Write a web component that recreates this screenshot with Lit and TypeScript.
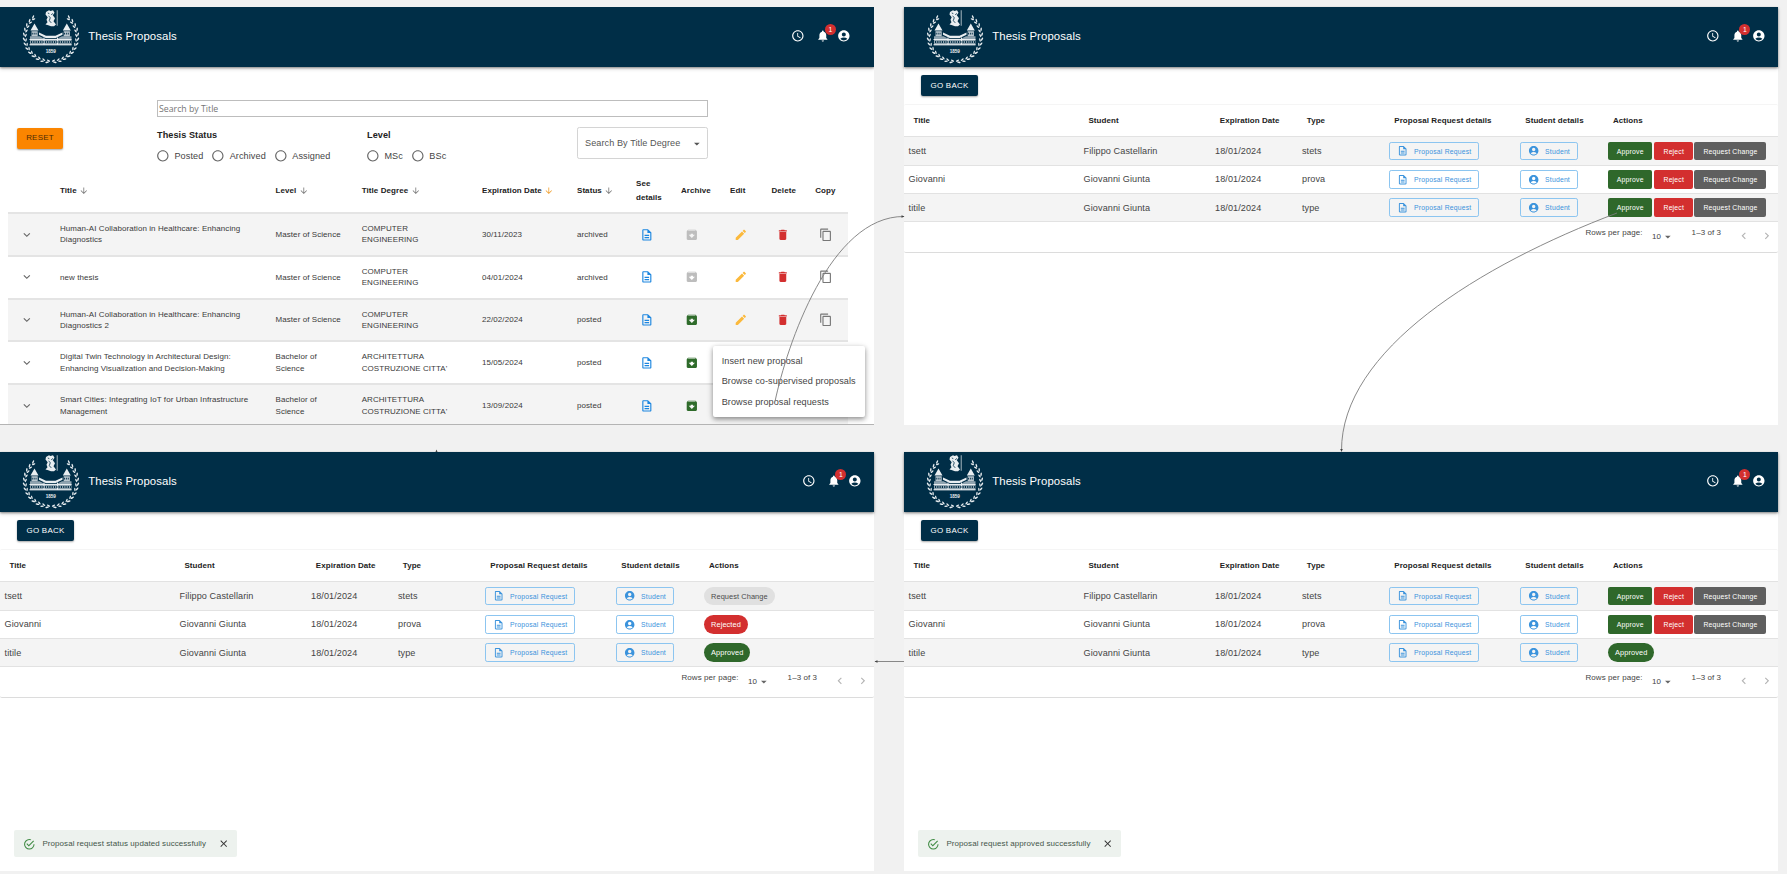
import { LitElement, html, css, svg, nothing } from "lit";
import { customElement, property } from "lit/decorators.js";

const ICONS: Record<string, string> = {
  clock:
    "M11.99 2C6.47 2 2 6.48 2 12s4.47 10 9.99 10C17.52 22 22 17.52 22 12S17.52 2 11.99 2zM12 20c-4.42 0-8-3.58-8-8s3.58-8 8-8 8 3.58 8 8-3.58 8-8 8zm.5-13H11v6l5.25 3.15.75-1.23-4.5-2.67z",
  bell: "M12 22c1.1 0 2-.9 2-2h-4c0 1.1.89 2 2 2zm6-6v-5c0-3.07-1.64-5.64-4.5-6.32V4c0-.83-.67-1.5-1.5-1.5s-1.5.67-1.5 1.5v.68C7.63 5.36 6 7.92 6 11v5l-2 2v1h16v-1l-2-2z",
  account:
    "M12 2C6.48 2 2 6.48 2 12s4.48 10 10 10 10-4.48 10-10S17.52 2 12 2zm0 4c1.93 0 3.5 1.57 3.5 3.5S13.93 13 12 13s-3.5-1.57-3.5-3.5S10.07 6 12 6zm0 14c-2.03 0-4.43-.82-6.14-2.88C7.55 15.8 9.68 15 12 15s4.45.8 6.14 2.12C16.43 19.18 14.03 20 12 20z",
  doc: "M8 16h8v2H8zm0-4h8v2H8zm6-10H6c-1.1 0-2 .9-2 2v16c0 1.1.89 2 1.99 2H18c1.1 0 2-.9 2-2V8l-6-6zm4 18H6V4h7v5h5v11z",
  archive:
    "M20.54 5.23l-1.39-1.68C18.88 3.21 18.47 3 18 3H6c-.47 0-.88.21-1.16.55L3.46 5.23C3.17 5.57 3 6.02 3 6.5V19c0 1.1.9 2 2 2h14c1.1 0 2-.9 2-2V6.5c0-.48-.17-.93-.46-1.27zM12 17.5L6.5 12H10v-2h4v2h3.5L12 17.5zM5.12 5l.81-1h12l.94 1H5.12z",
  edit: "M3 17.25V21h3.75L17.81 9.94l-3.75-3.75L3 17.25zM20.71 7.04c.39-.39.39-1.02 0-1.41l-2.34-2.34a.9959.9959 0 0 0-1.41 0l-1.83 1.83 3.75 3.75 1.83-1.83z",
  trash: "M6 19c0 1.1.9 2 2 2h8c1.1 0 2-.9 2-2V7H6v12zM19 4h-3.5l-1-1h-5l-1 1H5v2h14V4z",
  copy: "M16 1H4c-1.1 0-2 .9-2 2v14h2V3h12V1zm3 4H8c-1.1 0-2 .9-2 2v14c0 1.1.9 2 2 2h11c1.1 0 2-.9 2-2V7c0-1.1-.9-2-2-2zm0 16H8V7h11v14z",
  down: "M7.41 8.59 12 13.17l4.59-4.58L18 10l-6 6-6-6 1.41-1.41z",
  left: "M15.41 16.59 10.83 12l4.58-4.59L14 6l-6 6 6 6 1.41-1.41z",
  right: "M8.59 16.59 13.17 12 8.59 7.41 10 6l6 6-6 6-1.41-1.41z",
  caret: "M7 10l5 5 5-5z",
  arrow: "M20 12l-1.41-1.41L13 16.17V4h-2v12.17l-5.58-5.59L4 12l8 8 8-8z",
  radio:
    "M12 2C6.48 2 2 6.48 2 12s4.48 10 10 10 10-4.48 10-10S17.52 2 12 2zm0 18c-4.42 0-8-3.58-8-8s3.58-8 8-8 8 3.58 8 8-3.58 8-8 8z",
  done: "M20 12a8 8 0 1 1-5.76-7.69l1.57-1.57A9.8 9.8 0 0 0 12 2a10 10 0 1 0 10 10h-2zM7.91 10.08 6.5 11.5 11 16 21 6l-1.41-1.42L11 13.17z",
  close:
    "M19 6.41 17.59 5 12 10.59 6.41 5 5 6.41 10.59 12 5 17.59 6.41 19 12 13.41 17.59 19 19 17.59 13.41 12z",
};

const icon = (name: string, cls = "") =>
  html`<svg class="icon ${cls}" viewBox="0 0 24 24"><path d=${ICONS[name]} /></svg>`;

const shared = css`
  :host {
    display: block;
    font-family: "Liberation Sans", Arial, sans-serif;
    box-sizing: border-box;
  }
  *,
  *::before {
    box-sizing: border-box;
  }
  .icon {
    width: 13.66px;
    height: 13.66px;
    fill: currentColor;
    flex: none;
    display: block;
  }
`;

function leaf(angle: number, side: number) {
  const a = (angle * Math.PI) / 180;
  const x = 29 + side * Math.sin(a) * 26;
  const y = 28.6 - Math.cos(a) * 24.8;
  return svg`<g transform="translate(${x.toFixed(2)} ${y.toFixed(2)}) rotate(${(side * angle).toFixed(1)})">
    <ellipse cx="0" cy="-1.3" rx="1.9" ry=".75" transform="rotate(${side * 24})" />
    <ellipse cx=${side * 1.2} cy="1.3" rx="1.8" ry=".7" transform="rotate(${side * -20})" />
  </g>`;
}

@customElement("top-bar")
export class TopBar extends LitElement {
  static styles = [
    shared,
    css`
      :host {
        position: relative;
        z-index: 1;
      }
      .bar {
        height: 59.6px;
        background: #002e47;
        color: #fff;
        display: flex;
        align-items: center;
        padding: 0 12.8px 0 22px;
        box-shadow: 0 1px 2px rgba(0, 0, 0, 0.38), 0 2px 4px rgba(0, 0, 0, 0.16);
      }
      .bar.inset {
        padding-right: 23.3px;
      }
      .logo {
        width: 58px;
        height: 58px;
        fill: #e9eef1;
      }
      .logo text {
        font: bold 4.6px "Liberation Sans", sans-serif;
      }
      .title {
        flex: 1;
        margin-left: 8.2px;
        font-size: 11.38px;
        line-height: 13px;
        letter-spacing: 0.0075em;
        margin-top: -1px;
      }
      .icons {
        display: flex;
        align-items: center;
        margin-top: -1px;
      }
      .bell {
        position: relative;
        margin: 0 7px 0 11.4px;
      }
      .badge {
        position: absolute;
        left: 8.2px;
        top: -5.8px;
        width: 11.4px;
        height: 11.4px;
        border-radius: 50%;
        background: #d32f2f;
        font-size: 6.8px;
        line-height: 11.4px;
        text-align: center;
      }
    `,
  ];
  @property({ type: Boolean }) inset = false;
  render() {
    const angles = Array.from({ length: 13 }, (_, i) => 40 + i * 10.9);
    return html`<div class="bar ${this.inset ? "inset" : ""}">
      <svg class="logo" viewBox="0 0 58 58">
        ${angles.map((a) => svg`${leaf(a, -1)}${leaf(a, 1)}`)}
        <path
          d="M24 4l3-1.800 1.500.8 2.500-.8 1.500 2.500-1.700 2.500 2.200 3-1.500 3 2.500 3.300-2 1.800h-3l-3.500-1.300-2-.4 2-2.300-1-2.500 1.200-2.500-2.200-2.800zM34.800 2.200h.7v15.500h-.7z"
        />
        <path
          d="M26.500 8l1.800 1.500-1 3.200 2 2.200M31 5.500l-1.800 1.200M25.800 5l1.500.6"
          fill="none"
          stroke="#002e47"
          stroke-width=".8"
        />
        <path d="M12.500 15.500l4 7h-8zM44.800 15.500l4 7h-8z" />
        <path d="M9.500 23.200h6.200v5h-6.200zM41.700 23.200h6.200v5h-6.200z" opacity=".8" />
        <path d="M17 24.500l7 3.300h9.500l7-3.300v2.300l-6.700 3.200h-10.100l-6.700-3.200z" />
        <path d="M8 28.200h9.500l5 2.600h12.500l5-2.600h9.500v9h-41.500z" opacity=".62" />
        <path d="M7.500 31h42v.9h-42zM7.500 36.300h42v1h-42zM21.500 29.500h1v7.500h-1zM35 29.500h1v7.500h-1z" />
        <path d="M9 34h40" fill="none" stroke="#002e47" stroke-width="2" stroke-dasharray="1.100 1.200" />
        <path
          d="M9.800 25.600h5.600M42 25.600h5.600"
          fill="none"
          stroke="#002e47"
          stroke-width="1.800"
          stroke-dasharray=".9 1"
        />
        <text x="28.800" y="45.400" text-anchor="middle">1859</text>
      </svg>
      <div class="title">Thesis Proposals</div>
      <div class="icons">
        ${icon("clock")}
        <div class="bell">${icon("bell")}<span class="badge">1</span></div>
        ${icon("account")}
      </div>
    </div>`;
  }
}

interface Proposal {
  title: string;
  level: string;
  degree: string;
  date: string;
  status: string;
}

const PROPOSALS: Proposal[] = [
  { title: "Human-AI Collaboration in Healthcare: Enhancing\nDiagnostics", level: "Master of Science", degree: "COMPUTER\nENGINEERING", date: "30/11/2023", status: "archived" },
  { title: "new thesis", level: "Master of Science", degree: "COMPUTER\nENGINEERING", date: "04/01/2024", status: "archived" },
  { title: "Human-AI Collaboration in Healthcare: Enhancing\nDiagnostics 2", level: "Master of Science", degree: "COMPUTER\nENGINEERING", date: "22/02/2024", status: "posted" },
  { title: "Digital Twin Technology in Architectural Design:\nEnhancing Visualization and Decision-Making", level: "Bachelor of\nScience", degree: "ARCHITETTURA\nCOSTRUZIONE CITTA'", date: "15/05/2024", status: "posted" },
  { title: "Smart Cities: Integrating IoT for Urban Infrastructure\nManagement", level: "Bachelor of\nScience", degree: "ARCHITETTURA\nCOSTRUZIONE CITTA'", date: "13/09/2024", status: "posted" },
];

@customElement("proposal-list")
export class ProposalList extends LitElement {
  static styles = [
    shared,
    css`
      :host {
        position: relative;
        height: 100%;
        overflow: hidden;
        background: #fff;
        border-bottom: 1px solid #b4b4b4;
      }
      .filters {
        display: grid;
        grid-template-columns: 140px 551px;
        padding: 33.4px 0 0 17px;
      }
      .reset {
        margin-top: 27.6px;
        width: 46px;
        height: 21px;
        border-radius: 2px;
        background: #fb8500;
        color: #4f2c06;
        font-size: 7.97px;
        letter-spacing: 0.02857em;
        display: flex;
        align-items: center;
        justify-content: center;
        padding-bottom: 1px;
        box-shadow: 0 1px 2px rgba(0, 0, 0, 0.35);
      }
      .search {
        height: 17px;
        border: 1px solid #bdbdbd;
        padding-left: 1px;
        font: 8.75px/17.4px "Open Sans", sans-serif;
        color: #757575;
      }
      .row {
        display: flex;
        align-items: flex-start;
        margin-top: 10.4px;
      }
      .group {
        width: 210px;
        font-size: 9.1px;
        letter-spacing: 0.00938em;
        color: #333;
        padding-top: 1.6px;
      }
      .group b {
        display: block;
        line-height: 13px;
        color: #222;
      }
      .opts {
        display: flex;
        margin: 6.8px 0 0 -0.8px;
      }
      .opt {
        display: flex;
        align-items: center;
        gap: 4.6px;
        margin-right: 8.2px;
        color: #444;
        white-space: nowrap;
      }
      .opt .icon {
        color: #666;
      }
      .select {
        width: 131px;
        height: 32px;
        border: 1px solid #d4d4d4;
        border-radius: 2.3px;
        display: flex;
        align-items: center;
        justify-content: space-between;
        padding: 0 3px 0 7px;
        font-size: 9.1px;
        letter-spacing: 0.00938em;
        color: #555;
      }
      .table {
        margin: 7px 26px 0 8px;
      }
      .tr {
        display: grid;
        grid-template-columns: 52px 215.5px 86.2px 120.3px 95px 59px 45px 49px 41.5px 43.8px 1fr;
        align-items: center;
        height: 42.8px;
        font-size: 7.97px;
        line-height: 11.39px;
        letter-spacing: 0.01071em;
        white-space: pre-line;
        color: #3a3a3a;
        border-bottom: 2px solid #e4e4e4;
      }
      .tr.head {
        height: 44.6px;
        font-weight: bold;
        color: #222;
        line-height: 13.66px;
      }
      .tr.odd {
        background: #f4f4f4;
      }
      .tr .icon {
        margin-left: 4.2px;
      }
      .tr .chev {
        margin-left: 11.5px;
        color: #666;
      }
      .th {
        display: flex;
        align-items: center;
      }
      .tr .th .icon {
        width: 9.6px;
        height: 9.6px;
        margin-left: 2.6px;
        color: #777;
      }
      .tr .th .icon.on {
        color: #f0a030;
      }
      .doc {
        color: #1c86e0;
      }
      .off {
        color: #bdbdbd;
      }
      .green {
        color: #2e6b2a;
      }
      .edit {
        color: #fbb93c;
      }
      .trash {
        color: #d32f2f;
      }
      .copy {
        color: #777;
      }
      .menu {
        position: absolute;
        left: 712.7px;
        top: 339.3px;
        width: 152.3px;
        height: 70.4px;
        background: #fff;
        border-radius: 2px;
        padding: 4.6px 9px;
        font-size: 9.1px;
        letter-spacing: 0.00938em;
        line-height: 20.5px;
        color: #444;
        white-space: nowrap;
        box-shadow: 0 2px 4px rgba(0, 0, 0, 0.3), 0 2px 7px rgba(0, 0, 0, 0.2);
      }
    `,
  ];
  render() {
    const opt = (t: string) => html`<span class="opt">${icon("radio")}${t}</span>`;
    const th = (t: string, cls = "") => html`<span class="th">${t}${icon("arrow", cls)}</span>`;
    return html`
      <top-bar inset></top-bar>
      <div class="filters">
        <div class="reset">RESET</div>
        <div>
          <div class="search">Search by Title</div>
          <div class="row">
            <div class="group"><b>Thesis Status</b>
              <div class="opts">${["Posted", "Archived", "Assigned"].map(opt)}</div>
            </div>
            <div class="group"><b>Level</b>
              <div class="opts">${["MSc", "BSc"].map(opt)}</div>
            </div>
            <div class="select">Search By Title Degree ${icon("caret")}</div>
          </div>
        </div>
      </div>
      <div class="table">
        <div class="tr head">
          <span></span>${th("Title")}${th("Level")}${th("Title Degree")}${th("Expiration Date", "on")}${th("Status")}
          <span>See<br />details</span><span>Archive</span><span>Edit</span><span>Delete</span><span>Copy</span>
        </div>
        ${PROPOSALS.map(
          (p, i) => html`<div class="tr ${i % 2 ? "" : "odd"}">
            ${icon("down", "chev")}<span>${p.title}</span><span>${p.level}</span><span>${p.degree}</span
            ><span>${p.date}</span><span>${p.status}</span>${icon("doc", "doc")}${icon(
              "archive",
              p.status === "archived" ? "off" : "green",
            )}${icon("edit", "edit")}${icon("trash", "trash")}${icon("copy", "copy")}
          </div>`,
        )}
      </div>
      <div class="menu">
        <div>Insert new proposal</div>
        <div>Browse co-supervised proposals</div>
        <div>Browse proposal requests</div>
      </div>
    `;
  }
}

const REQUESTS = [
  ["tsett", "Filippo Castellarin", "stets"],
  ["Giovanni", "Giovanni Giunta", "prova"],
  ["titile", "Giovanni Giunta", "type"],
];

@customElement("request-list")
export class RequestList extends LitElement {
  static styles = [
    shared,
    css`
      :host {
        position: relative;
        height: 100%;
        background: #fff;
      }
      .back {
        width: 57px;
        height: 21px;
        margin: 8.8px 0 7.800px 17px;
        border-radius: 2px;
        background: #002e47;
        color: #fff;
        font-size: 7.97px;
        letter-spacing: 0.02857em;
        display: flex;
        align-items: center;
        justify-content: center;
        padding-bottom: 1px;
        box-shadow: 0 1px 2px rgba(0, 0, 0, 0.35);
      }
      .card {
        border-top: 1px solid #f5f5f5;
        border-radius: 2px;
        border-bottom: 1.4px solid #dcdcdc;
      }
      .tr {
        display: grid;
        grid-template-columns: 175px 131.4px 87px 87.5px 131px 87.6px 1fr;
        align-items: center;
        height: 28.3px;
        padding-left: 4.6px;
        font-size: 9.1px;
        letter-spacing: 0.00938em;
        color: #444;
        border-bottom: 1px solid #e2e2e2;
      }
      .tr.odd {
        background: #f4f4f4;
      }
      .tr.head {
        height: 32.2px;
        padding-left: 9.4px;
        font-size: 7.97px;
        letter-spacing: 0.01071em;
        font-weight: bold;
        color: #222;
      }
      .btn {
        display: inline-flex;
        align-items: center;
        height: 18.5px;
        border-radius: 2.2px;
        border: 1px solid #8cc5f0;
        color: #3b93dc;
        font-size: 6.83px;
        letter-spacing: 0.02857em;
        padding: 0 8px 0 7px;
        gap: 5.2px;
        width: 90px;
        white-space: nowrap;
      }
      .btn .icon {
        width: 11.4px;
        height: 11.4px;
      }
      .btn.s {
        width: 57.6px;
      }
      .acts {
        display: flex;
        gap: 2px;
      }
      .act {
        width: 44.4px;
        height: 18.4px;
        border-radius: 2px;
        background: #2f682b;
        color: #fff;
        font-size: 6.83px;
        letter-spacing: 0.02857em;
        display: flex;
        align-items: center;
        justify-content: center;
        white-space: nowrap;
      }
      .act.rej {
        width: 38.6px;
        background: #d32f2f;
      }
      .act.chg {
        width: 72px;
        margin-left: -0.6px;
        background: #5f5f5f;
      }
      .chip {
        height: 18.4px;
        border-radius: 10px;
        display: flex;
        align-items: center;
        padding: 0 7px;
        font-size: 7.4px;
        letter-spacing: 0.01071em;
        color: #fff;
        background: #2f682b;
      }
      .chip.rejected {
        background: #d32f2f;
      }
      .chip.change {
        background: #e0e0e0;
        color: #4a4a4a;
      }
      .foot {
        display: flex;
        height: 29.8px;
        padding: 4.4px 4.6px 0 0;
        justify-content: flex-end;
        font-size: 7.97px;
        letter-spacing: 0.01071em;
        line-height: 11.4px;
        color: #444;
      }
      .foot .num {
        margin: 4px 0 0 9.4px;
        display: flex;
      }
      .foot .num .icon {
        margin: -1px 17.4px 0 -0.4px;
        color: #666;
      }
      .range {
        width: 45.3px;
      }
      .foot .nav {
        display: flex;
        gap: 9.2px;
        margin-top: 2.6px;
        color: #b4b4b4;
      }
      .toast {
        position: absolute;
        left: 14px;
        bottom: 13.6px;
        height: 27px;
        border-radius: 2px;
        background: #edf2ee;
        display: flex;
        align-items: center;
        padding: 0 8.6px;
        font-size: 7.97px;
        letter-spacing: 0.01071em;
        color: #44564a;
        white-space: nowrap;
      }
      .toast .ok {
        width: 12.6px;
        height: 12.6px;
        margin-right: 7.2px;
        color: #3e8a42;
      }
      .toast .x {
        width: 11.4px;
        height: 11.4px;
        margin-left: 11.9px;
        margin-right: -1.2px;
        color: #333;
      }
    `,
  ];
  @property({ type: Array }) states: string[] = ["", "", ""];
  @property() toast = "";
  private action(state: string) {
    if (!state)
      return html`<span class="act">Approve</span><span class="act rej">Reject</span
        ><span class="act chg">Request Change</span>`;
    const cls = state === "Rejected" ? "rejected" : state === "Request Change" ? "change" : "";
    return html`<span class="chip ${cls}">${state}</span>`;
  }
  render() {
    return html`
      <top-bar></top-bar>
      <div class="back">GO BACK</div>
      <div class="card">
        <div class="tr head">
          <span>Title</span><span>Student</span><span>Expiration Date</span><span>Type</span
          ><span>Proposal Request details</span><span>Student details</span><span>Actions</span>
        </div>
        ${REQUESTS.map(
          ([title, student, type], i) => html`<div class="tr ${i % 2 ? "" : "odd"}">
            <span>${title}</span><span>${student}</span><span>18/01/2024</span><span>${type}</span
            ><span class="btn">${icon("doc")}Proposal Request</span
            ><span class="btn s">${icon("account")}Student</span>
            <div class="acts">${this.action(this.states[i])}</div>
          </div>`,
        )}
        <div class="foot">
          <span>Rows per page:</span>
          <span class="num">10${icon("caret")}</span>
          <span class="range">1–3 of 3</span>
          <span class="nav">${icon("left")}${icon("right")}</span>
        </div>
      </div>
      ${this.toast
        ? html`<div class="toast">${icon("done", "ok")}${this.toast}${icon("close", "x")}</div>`
        : nothing}
    `;
  }
}

@customElement("app-root")
export class AppRoot extends LitElement {
  static styles = [
    shared,
    css`
      :host {
        position: relative;
        height: 874px;
        overflow: hidden;
        background: #f1f1f1;
      }
      .board {
        display: grid;
        grid-template-columns: 874px 874px;
        grid-template-rows: 418px 419px;
        gap: 27px 30px;
        padding-top: 7px;
      }
      .links {
        position: absolute;
        left: 0;
        top: 0;
        width: 1787px;
        height: 874px;
        z-index: 5;
        fill: none;
        stroke: #7c7c7c;
        stroke-width: 0.9;
      }
      .links .tip {
        fill: #444;
        stroke: none;
      }
    `,
  ];
  render() {
    return html`
      <div class="board">
        <proposal-list></proposal-list>
        <request-list></request-list>
        <request-list
          .states=${["Request Change", "Rejected", "Approved"]}
          toast="Proposal request status updated successfully"
        ></request-list>
        <request-list .states=${["", "", "Approved"]} toast="Proposal request approved successfully"></request-list>
      </div>
      <svg class="links" viewBox="0 0 1787 874">
        <path d="M775 401.500C787 345 830 216 904 216.500" />
        <path d="M1617 213C1480 265 1341 350 1341.500 451" />
        <path d="M875 661.500H904" />
        <path class="tip" d="M904.500 216.500l-3-1.200v2.400zM1341.500 452l-1.300-3h2.600zM874.500 661.500l3-1.200v2.400zM435.500 452l1-2.500 1 2.500z" />
      </svg>
    `;
  }
}
